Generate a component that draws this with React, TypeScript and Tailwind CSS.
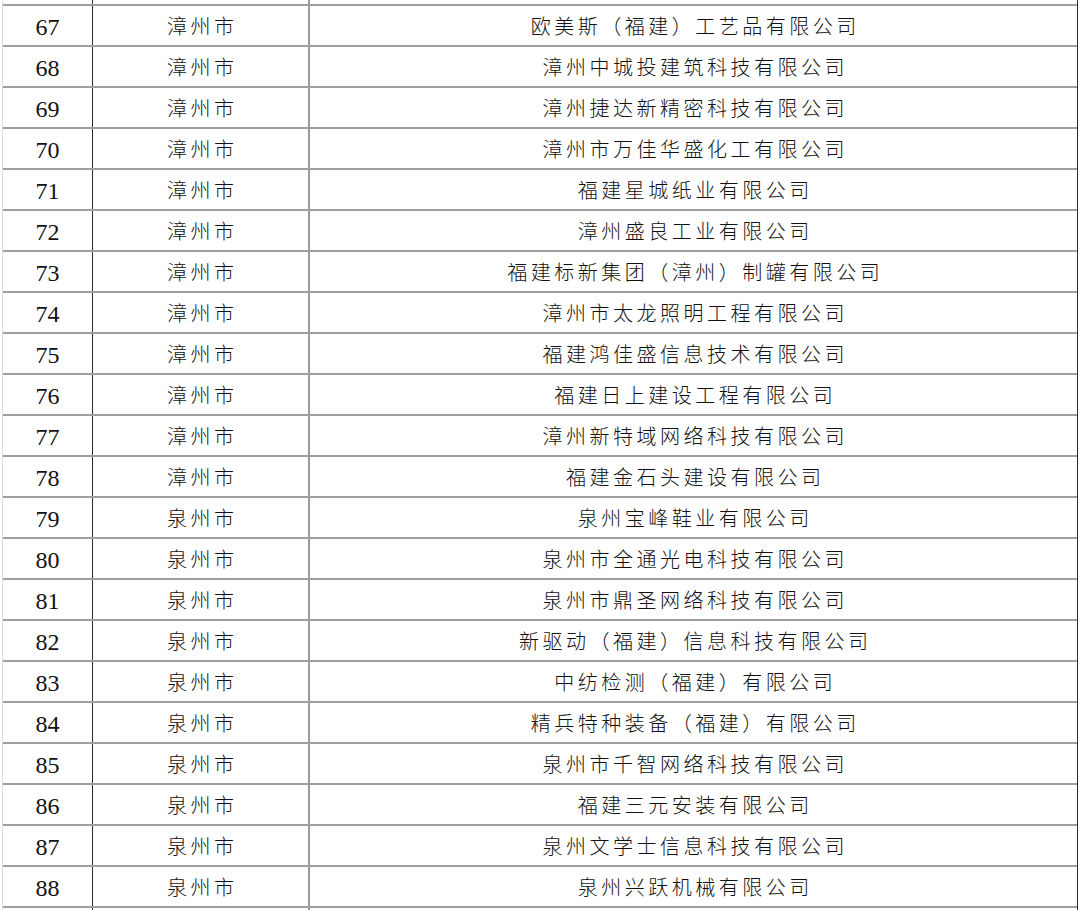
import React from "react";

const rows: [number, string, string][] = [
  [67, "漳州市", "欧美斯（福建）工艺品有限公司"],
  [68, "漳州市", "漳州中城投建筑科技有限公司"],
  [69, "漳州市", "漳州捷达新精密科技有限公司"],
  [70, "漳州市", "漳州市万佳华盛化工有限公司"],
  [71, "漳州市", "福建星城纸业有限公司"],
  [72, "漳州市", "漳州盛良工业有限公司"],
  [73, "漳州市", "福建标新集团（漳州）制罐有限公司"],
  [74, "漳州市", "漳州市太龙照明工程有限公司"],
  [75, "漳州市", "福建鸿佳盛信息技术有限公司"],
  [76, "漳州市", "福建日上建设工程有限公司"],
  [77, "漳州市", "漳州新特域网络科技有限公司"],
  [78, "漳州市", "福建金石头建设有限公司"],
  [79, "泉州市", "泉州宝峰鞋业有限公司"],
  [80, "泉州市", "泉州市全通光电科技有限公司"],
  [81, "泉州市", "泉州市鼎圣网络科技有限公司"],
  [82, "泉州市", "新驱动（福建）信息科技有限公司"],
  [83, "泉州市", "中纺检测（福建）有限公司"],
  [84, "泉州市", "精兵特种装备（福建）有限公司"],
  [85, "泉州市", "泉州市千智网络科技有限公司"],
  [86, "泉州市", "福建三元安装有限公司"],
  [87, "泉州市", "泉州文学士信息科技有限公司"],
  [88, "泉州市", "泉州兴跃机械有限公司"],
];

const cjk = "font-['Noto_Sans_CJK_SC',sans-serif] font-light";

export default function App() {
  return (
    <div className="w-[1080px] h-[910px] overflow-hidden bg-white text-[#111]">
      <div className="ml-[2px] w-[1076px] h-[910px] border-l border-l-[#dcdcdc] border-r border-r-[#2a2a2a] flex flex-col">
        <div className="flex h-[4px] shrink-0">
          <div className="w-[90px] border-r border-r-[#2a2a2a]" />
          <div className="w-[217px] border-r-2 border-r-[#9a9a9a]" />
          <div className="flex-1" />
        </div>
        {rows.map(([n, city, name]) => (
          <div key={n} className="flex h-[41px] shrink-0 border-t-2 border-t-[#9f9f9f]">
            <div className="w-[90px] border-r border-r-[#2a2a2a] flex items-center justify-center font-['Liberation_Serif',serif] text-[24px] pt-[2px]">
              {n}
            </div>
            <div className={`w-[217px] border-r-2 border-r-[#9a9a9a] flex items-center justify-center ${cjk} text-[20px] tracking-[3.5px] pl-[3.5px]`}>
              {city}
            </div>
            <div className={`flex-1 flex items-center justify-center ${cjk} text-[20px] tracking-[3.5px] pl-[3.5px]`}>
              {name}
            </div>
          </div>
        ))}
        <div className="flex flex-1 border-t-2 border-t-[#9f9f9f]">
          <div className="w-[90px] border-r border-r-[#2a2a2a]" />
          <div className="w-[217px] border-r-2 border-r-[#9a9a9a]" />
          <div className="flex-1" />
        </div>
      </div>
    </div>
  );
}
